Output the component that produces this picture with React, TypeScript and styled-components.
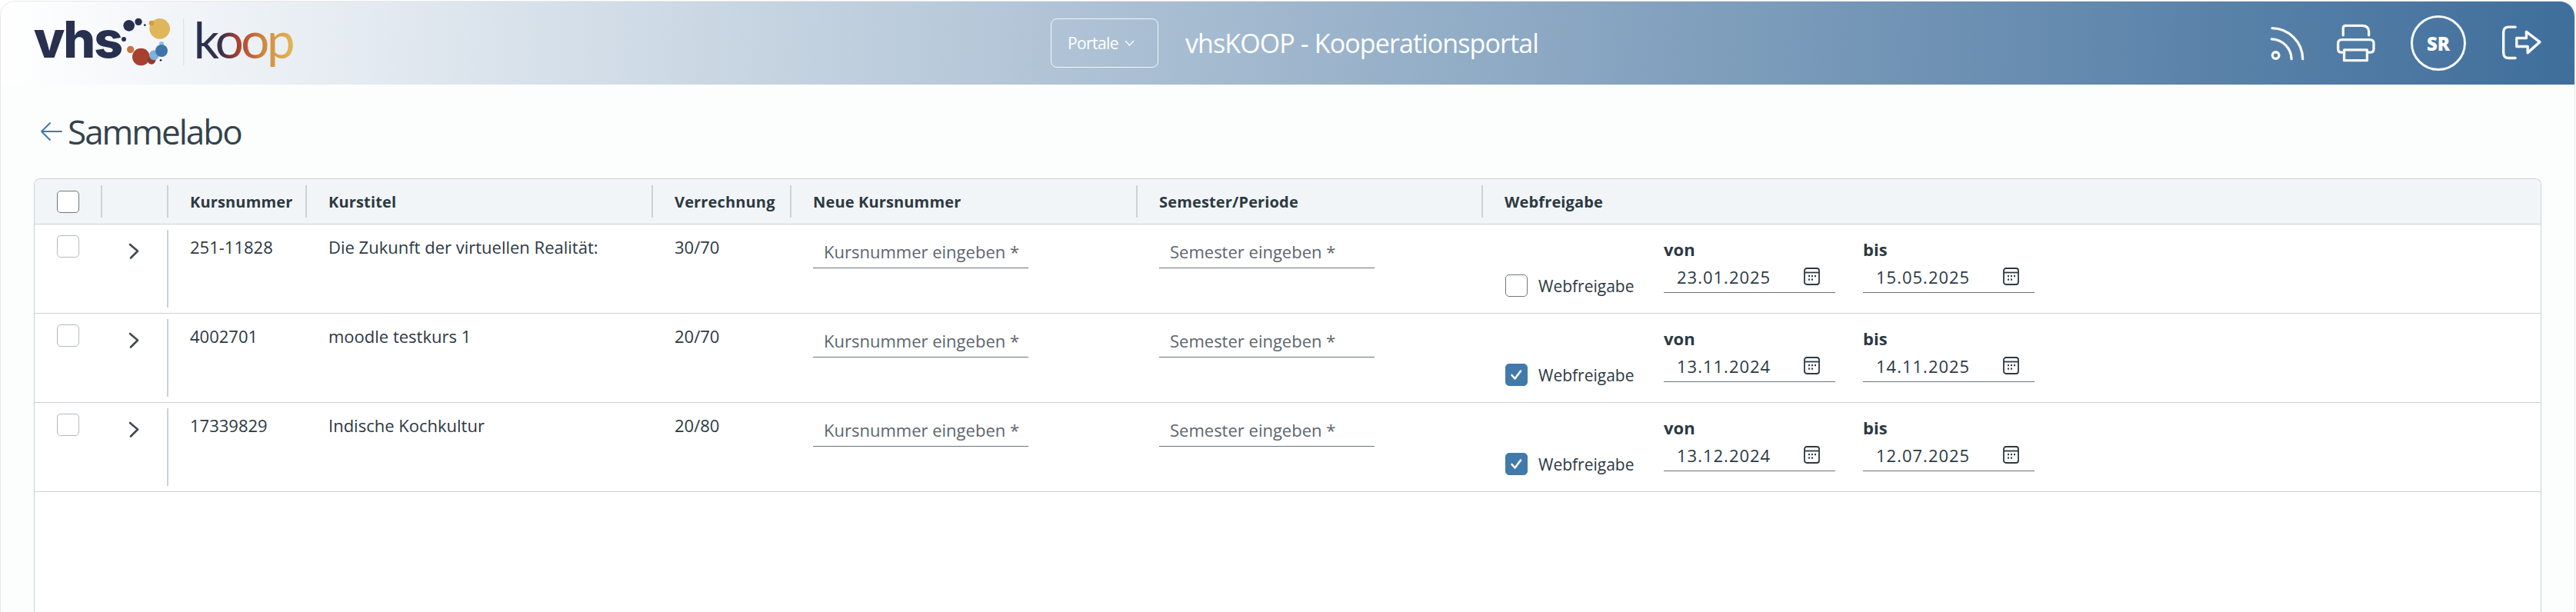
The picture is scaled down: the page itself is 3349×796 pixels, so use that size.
import React from "react";
import styled, { createGlobalStyle } from "styled-components";

const font = `"Open Sans", "Noto Sans", sans-serif`;

const colors = {
  text: "#2c3942",
  muted: "#5c666d",
  line: "#ccd2d7",
  blue: "#4279ab",
  page: "#fcfefd",
  head: "#f2f5f8",
};

const GlobalStyle = createGlobalStyle`
  html, body {
    margin: 0;
    padding: 0;
    background: #ffffff;
    font-family: ${font};
    color: ${colors.text};
    overflow: hidden;
  }
  * { box-sizing: border-box; }
`;

const Shell = styled.div`
  display: flex;
  flex-direction: column;
  width: 3348px;
  height: 795px;
  margin-top: 1px;
  background: ${colors.page};
  border: 1px solid #e6e8e8;
  border-bottom: 0;
  border-radius: 20px 20px 0 0;
  overflow: hidden;
`;

const TopBar = styled.header`
  display: flex;
  align-items: center;
  flex: 0 0 108px;
  background: linear-gradient(92deg, #ffffff 0%, #3f6e9b 100%);
`;

const LogoSlot = styled.div`
  flex: 0 0 1365px;
  display: flex;
`;

const PortalButton = styled.button`
  display: flex;
  align-items: center;
  gap: 8px;
  width: 140px;
  height: 64px;
  padding: 0 0 0 21px;
  border: 1px solid rgba(255, 255, 255, 0.85);
  border-radius: 8px;
  background: transparent;
  color: #ffffff;
  font-family: ${font};
  font-size: 21px;
  letter-spacing: -0.6px;
`;

const PortalTitle = styled.div`
  flex: 1;
  margin-left: 35px;
  color: #ffffff;
  font-size: 34px;
  letter-spacing: -0.9px;
`;

const TopActions = styled.div`
  display: flex;
  align-items: center;
  margin-right: 41px;
`;

const ActionIcon = styled.svg<{ $gap: number }>`
  display: block;
  margin-left: ${(p) => p.$gap}px;
  fill: none;
  stroke: #f6f8fa;
  stroke-width: 10;
  stroke-linecap: round;
  stroke-linejoin: round;
`;

const Avatar = styled.div`
  display: flex;
  align-items: center;
  justify-content: center;
  width: 72px;
  height: 72px;
  margin-left: 45px;
  border: 3px solid #f6f8fa;
  border-radius: 50%;
  color: #ffffff;
  font-size: 24px;
  font-weight: 800;
`;

const Main = styled.main`
  flex: 1;
  display: flex;
  flex-direction: column;
  min-height: 0;
  padding: 0 43px;
`;

const TitleRow = styled.div`
  display: flex;
  align-items: center;
  flex: 0 0 122px;
  padding: 0 0 0 8px;
`;

const PageTitle = styled.h1`
  margin: 0 0 0 6px;
  font-size: 44px;
  font-weight: 400;
  letter-spacing: -2px;
  color: #33434c;
`;

const Table = styled.div`
  flex: 1;
  background: #ffffff;
  border: 1px solid ${colors.line};
  border-bottom: 0;
  border-radius: 8px 8px 0 0;
  overflow: hidden;
`;

const columns = "86px 86px 180px 450px 180px 450px 449px 1fr";

const HeaderRow = styled.div`
  display: grid;
  grid-template-columns: ${columns};
  align-items: center;
  height: 59px;
  background: ${colors.head};
  border-bottom: 1px solid ${colors.line};
`;

const HeaderCell = styled.div<{ $bare?: boolean }>`
  display: flex;
  align-items: center;
  height: 42px;
  padding-left: ${(p) => (p.$bare ? 29 : 28)}px;
  border-left: ${(p) => (p.$bare ? "0" : `2px solid ${colors.line}`)};
  font-size: 20px;
  font-weight: 700;
  letter-spacing: 0.15px;
  white-space: nowrap;
`;

const Row = styled.div`
  display: grid;
  grid-template-columns: ${columns};
  height: 116px;
  border-bottom: 1px solid ${colors.line};
`;

const Cell = styled.div`
  padding: 14px 0 0 30px;
  font-size: 22px;
  line-height: 30px;
  white-space: nowrap;
`;

const CheckCell = styled.div`
  padding: 14px 0 0 29px;
`;

const ExpandCell = styled.div`
  display: flex;
  justify-content: flex-end;
  padding: 24px 36px 0 0;
  svg {
    display: block;
  }
`;

const Divider = styled.div`
  position: relative;
  padding: 14px 0 0 30px;
  font-size: 22px;
  line-height: 30px;
  white-space: nowrap;
  &::before {
    content: "";
    position: absolute;
    left: 0;
    top: 7px;
    bottom: 7px;
    width: 2px;
    background: ${colors.line};
  }
`;

const Box = styled.span<{ $checked?: boolean; $strong?: boolean }>`
  display: flex;
  align-items: center;
  justify-content: center;
  flex: none;
  width: 29px;
  height: 29px;
  border: 1px solid ${(p) => (p.$checked ? colors.blue : p.$strong ? "#6f777c" : "#b4babe")};
  border-radius: 5px;
  background: ${(p) => (p.$checked ? colors.blue : "#ffffff")};
`;

const TextInput = styled.input`
  display: block;
  width: 280px;
  height: 43px;
  margin: 0;
  padding: 0 0 0 14px;
  border: 0;
  border-bottom: 1px solid #6a7378;
  outline: 0;
  background: transparent;
  font-family: ${font};
  font-size: 22px;
  color: ${colors.text};
  &::placeholder {
    color: ${colors.muted};
    opacity: 1;
  }
`;

const InputCell = styled.div`
  padding: 14px 0 0 30px;
`;

const PublishCell = styled.div`
  display: flex;
  align-items: flex-start;
  padding: 20px 0 0 31px;
`;

const PublishToggle = styled.label`
  display: flex;
  align-items: center;
  gap: 14px;
  width: 206px;
  margin-top: 45px;
  font-size: 21px;
`;

const DateField = styled.div<{ $gap?: number }>`
  width: 223px;
  margin-left: ${(p) => p.$gap ?? 0}px;
`;

const DateLabel = styled.div`
  height: 27px;
  font-size: 22px;
  font-weight: 700;
  line-height: 24px;
`;

const DateWrap = styled.div`
  display: flex;
  align-items: center;
  justify-content: space-between;
  height: 42px;
  padding: 0 20px 0 17px;
  border-bottom: 1px solid #6a7378;
`;

const DateInput = styled.input`
  width: 150px;
  padding: 0;
  border: 0;
  outline: 0;
  background: transparent;
  font-family: ${font};
  font-size: 22px;
  letter-spacing: 1px;
  color: ${colors.text};
`;

const Check = () => (
  <svg width="17" height="17" viewBox="0 0 17 17" fill="none" stroke="#fff" strokeWidth="2.6" strokeLinecap="round" strokeLinejoin="round">
    <polyline points="2.5,9 6.5,13.5 14,3.5" />
  </svg>
);

const Chevron = () => (
  <svg width="14" height="21" viewBox="0 0 14 21" fill="none" stroke="#3f4a52" strokeWidth="2.6" strokeLinecap="round" strokeLinejoin="round">
    <polyline points="2,2 12,10.5 3,19.5" />
  </svg>
);

const CalendarIcon = () => (
  <svg width="21" height="23" viewBox="0 0 21 23" fill="none" stroke="#2c3942" strokeWidth="1.8">
    <rect x="1" y="1" width="19" height="21" rx="3" />
    <line x1="1" y1="6.5" x2="20" y2="6.5" />
    <g fill="#2c3942" stroke="none">
      <rect x="6" y="10" width="2" height="2.2" />
      <rect x="10" y="10" width="2" height="2.2" />
      <rect x="14" y="10" width="2" height="2.2" />
      <rect x="6" y="14.5" width="2" height="2.2" />
      <rect x="10" y="14.5" width="2" height="2.2" />
    </g>
  </svg>
);

const BackArrow = () => (
  <svg width="30" height="26" viewBox="0 0 30 26" fill="none" stroke={colors.blue} strokeWidth="2" strokeLinecap="round" strokeLinejoin="round">
    <path d="M28 13 H2 M13 2 L2 13 L13 24" />
  </svg>
);

const Logo = () => (
  <svg width="400" height="108" viewBox="0 6 1200 324">
    <defs>
      <linearGradient id="koop-fill" gradientUnits="userSpaceOnUse" x1="765" y1="0" x2="1140" y2="0">
        <stop offset="0" stopColor="#27304f" />
        <stop offset="0.25" stopColor="#3a2f4c" />
        <stop offset="0.45" stopColor="#b5432f" />
        <stop offset="0.7" stopColor="#cf8a3e" />
        <stop offset="1" stopColor="#e3b655" />
      </linearGradient>
    </defs>
    <text x="128" y="226" fontFamily="Inter, sans-serif" fontWeight="800" fontSize="198" letterSpacing="-6" fill="#27304f">
      vhs
    </text>
    <circle cx="500" cy="100" r="22" fill="#27304f" />
    <circle cx="537" cy="85" r="14" fill="#27304f" />
    <circle cx="562" cy="98" r="4" fill="#27304f" />
    <circle cx="480" cy="153" r="9" fill="#27304f" />
    <circle cx="620" cy="112" r="40" fill="#dfb65b" />
    <circle cx="588" cy="90" r="10" fill="#d69a45" />
    <circle cx="506" cy="193" r="14" fill="#c8743e" />
    <circle cx="547" cy="222" r="34" fill="#a8402f" />
    <circle cx="588" cy="235" r="16" fill="#8f3a30" />
    <circle cx="598" cy="215" r="19" fill="#7fb0dd" />
    <circle cx="627" cy="171" r="9" fill="#8dbfe3" />
    <circle cx="627" cy="198" r="24" fill="#3f74ab" />
    <circle cx="624" cy="235" r="4" fill="#27304f" />
    <rect x="711" y="72" width="4" height="184" fill="#dfe3e8" />
    <text x="752" y="228" fontFamily="Lato, sans-serif" fontWeight="400" fontSize="196" letterSpacing="-10" fill="url(#koop-fill)">
      koop
    </text>
  </svg>
);

type Course = {
  number: string;
  title: string;
  split: string;
  web: boolean;
  from: string;
  to: string;
};

const courses: Course[] = [
  { number: "251-11828", title: "Die Zukunft der virtuellen Realität:", split: "30/70", web: false, from: "23.01.2025", to: "15.05.2025" },
  { number: "4002701", title: "moodle testkurs 1", split: "20/70", web: true, from: "13.11.2024", to: "14.11.2025" },
  { number: "17339829", title: "Indische Kochkultur", split: "20/80", web: true, from: "13.12.2024", to: "12.07.2025" },
];

export default function App() {
  return (
    <>
      <GlobalStyle />
      <Shell>
        <TopBar>
          <LogoSlot>
            <Logo />
          </LogoSlot>
          <PortalButton>
            Portale
            <svg width="13" height="8" viewBox="0 0 13 8" fill="none" stroke="#fff" strokeWidth="1.2">
              <polyline points="1,1 6.5,7 12,1" />
            </svg>
          </PortalButton>
          <PortalTitle>vhsKOOP - Kooperationsportal</PortalTitle>
          <TopActions>
            <ActionIcon $gap={0} width="48" height="47" viewBox="155 95 145 140">
              <circle cx="181" cy="212" r="13" />
              <path d="M165 148 A80 80 0 0 1 243 226" />
              <path d="M167 105 A122 122 0 0 1 287 226" />
            </ActionIcon>
            <ActionIcon $gap={38} width="53" height="53" viewBox="405 80 160 160">
              <path d="M436 128 V100 Q436 90 446 90 H510 Q537 90 537 115 V128" />
              <path d="M440 195 H428 Q416 195 416 183 V160 Q416 145 431 145 H541 Q556 145 556 160 V183 Q556 195 544 195 H532" />
              <rect x="440" y="185" width="90" height="42" />
            </ActionIcon>
            <Avatar>SR</Avatar>
            <ActionIcon $gap={47} width="53" height="47" viewBox="1060 95 155 135">
              <path d="M1110 100 H1085 Q1065 100 1065 120 V198 Q1065 218 1085 218 H1110" />
              <path d="M1115 142 H1152 V118 L1203 157 L1157 198 V174 H1115 Z" />
            </ActionIcon>
          </TopActions>
        </TopBar>
        <Main>
          <TitleRow>
            <BackArrow />
            <PageTitle>Sammelabo</PageTitle>
          </TitleRow>
          <Table>
            <HeaderRow>
              <HeaderCell $bare>
                <Box $strong />
              </HeaderCell>
              <HeaderCell />
              <HeaderCell>Kursnummer</HeaderCell>
              <HeaderCell>Kurstitel</HeaderCell>
              <HeaderCell>Verrechnung</HeaderCell>
              <HeaderCell>Neue Kursnummer</HeaderCell>
              <HeaderCell>Semester/Periode</HeaderCell>
              <HeaderCell>Webfreigabe</HeaderCell>
            </HeaderRow>
            {courses.map((course) => (
              <Row key={course.number}>
                <CheckCell>
                  <Box />
                </CheckCell>
                <ExpandCell>
                  <Chevron />
                </ExpandCell>
                <Divider>{course.number}</Divider>
                <Cell>{course.title}</Cell>
                <Cell>{course.split}</Cell>
                <InputCell>
                  <TextInput placeholder="Kursnummer eingeben *" />
                </InputCell>
                <InputCell>
                  <TextInput placeholder="Semester eingeben *" />
                </InputCell>
                <PublishCell>
                  <PublishToggle>
                    <Box $checked={course.web} $strong>{course.web && <Check />}</Box>
                    Webfreigabe
                  </PublishToggle>
                  <DateField>
                    <DateLabel>von</DateLabel>
                    <DateWrap>
                      <DateInput defaultValue={course.from} />
                      <CalendarIcon />
                    </DateWrap>
                  </DateField>
                  <DateField $gap={36}>
                    <DateLabel>bis</DateLabel>
                    <DateWrap>
                      <DateInput defaultValue={course.to} />
                      <CalendarIcon />
                    </DateWrap>
                  </DateField>
                </PublishCell>
              </Row>
            ))}
          </Table>
        </Main>
      </Shell>
    </>
  );
}
